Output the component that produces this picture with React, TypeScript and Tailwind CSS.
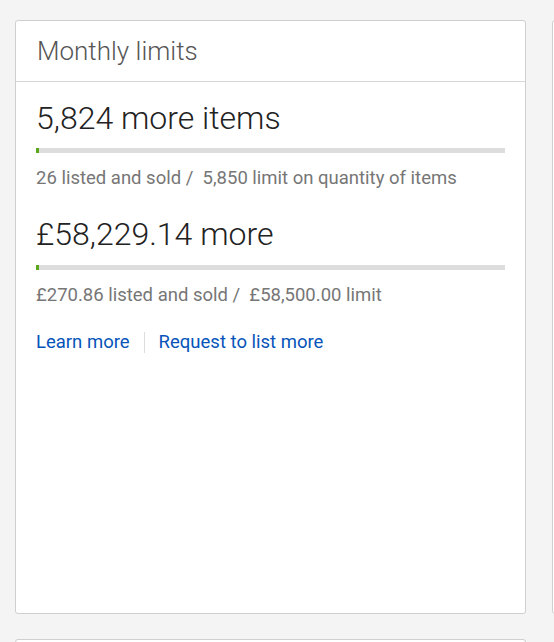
export default function App() {
  return (
    <div
      className="w-[554px] h-[642px] overflow-hidden bg-[#f4f4f4] relative"
      style={{ fontFamily: "Roboto, 'Liberation Sans', sans-serif" }}
    >
      <div className="flex gap-[26px] pt-[20px] pl-[15px]">
        <div className="w-[511px] h-[594px] shrink-0 bg-white border border-[#cfcfcf] rounded-[3px]">
          <div className="h-[61px] border-b border-[#d6d6d6] flex items-center px-[21px]">
            <h2 className="text-[26px] font-light text-[#555] leading-none pb-[1px]">Monthly limits</h2>
          </div>
          <div className="px-[20px] pt-[18px]">
            <div className="text-[32px] font-light text-[#222] leading-[36px]">5,824 more items</div>
            <div className="mt-[12px] h-[5px] bg-[#dddddd] flex">
              <div className="w-[3px] h-full bg-[#5ba71b]" />
            </div>
            <div className="mt-[14px] text-[18.5px] text-[#767676] leading-[22px]">26 listed and sold /&nbsp; 5,850 limit on quantity of items</div>
            <div className="mt-[27px] text-[32px] font-light text-[#222] leading-[36px]">£58,229.14 more</div>
            <div className="mt-[13px] h-[5px] bg-[#dddddd] flex">
              <div className="w-[3px] h-full bg-[#5ba71b]" />
            </div>
            <div className="mt-[14px] text-[18.5px] text-[#767676] leading-[22px]">£270.86 listed and sold /&nbsp; £58,500.00 limit</div>
            <div className="mt-[25px] flex items-center text-[18.5px] text-[#0654ba] leading-[22px]">
              <a href="#" className="pr-[14px]">Learn more</a>
              <span className="w-px h-[21px] bg-[#ddd]" />
              <a href="#" className="pl-[14px]">Request to list more</a>
            </div>
          </div>
        </div>
        <div className="w-[300px] h-[594px] shrink-0 bg-white border border-[#cfcfcf] rounded-[3px]" />
      </div>
      <div className="mt-[25px] ml-[15px] w-[511px] h-[40px] bg-white border border-[#cfcfcf] rounded-[3px]" />
    </div>
  );
}
